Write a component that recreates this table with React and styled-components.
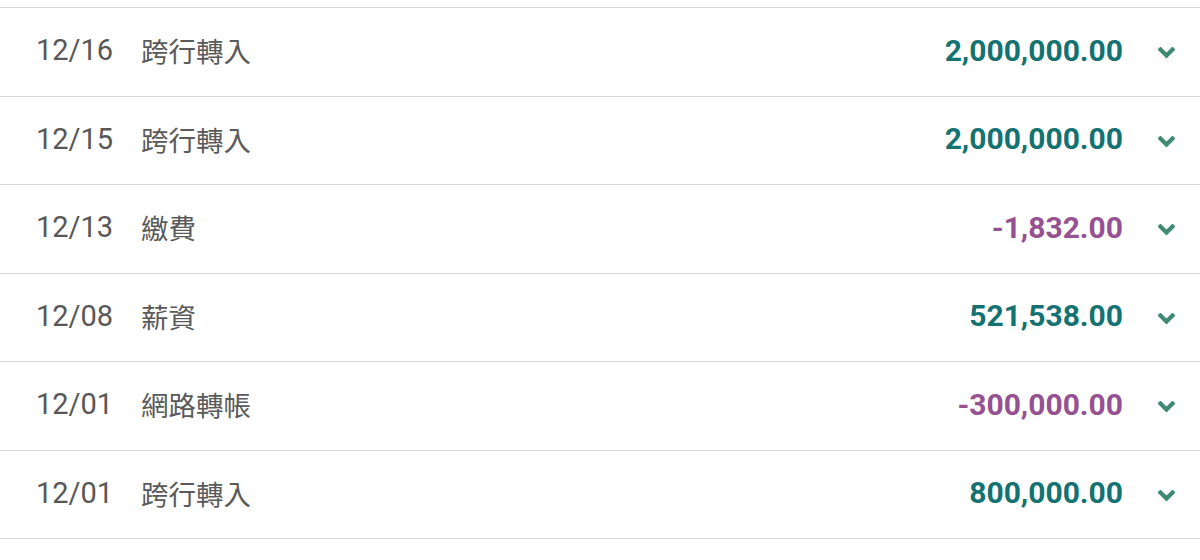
import React from "react";
import styled, { createGlobalStyle } from "styled-components";

const Global = createGlobalStyle`
  html, body { margin: 0; padding: 0; background: #fff; }
  body { font-family: Roboto, "Noto Sans CJK TC", sans-serif; }
`;

const List = styled.ul`
  list-style: none;
  margin: 0;
  padding: 7px 0 0;
  width: 1200px;
`;

const Row = styled.li`
  display: flex;
  align-items: center;
  box-sizing: border-box;
  height: 88.5px;
  padding: 0 24px 3px 36px;
  border-top: 1px solid #d6d6d6;
  &:last-child { border-bottom: 1px solid #d6d6d6; height: 89.5px; }
`;

const DateText = styled.span`
  font-family: Roboto, sans-serif;
  font-size: 29px;
  color: #585858;
  width: 105px;
  flex: none;
`;

const Desc = styled.span`
  font-family: "Noto Sans CJK TC", sans-serif;
  font-size: 27.5px;
  color: #5a5a5a;
  flex: 1;
`;

const Amount = styled.span`
  font-family: Roboto, sans-serif;
  font-weight: 700;
  font-size: 30px;
  color: ${p => (p.$neg ? "#955192" : "#147272")};
`;

const Toggle = styled.span`
  display: flex;
  align-items: center;
  justify-content: center;
  width: 20px;
  margin-left: 33px;
  margin-top: 6px;
  color: #3f8b71;
`;

const Chevron = () => (
  <svg width="17" height="12" viewBox="0 0 17 12">
    <path d="M2.5 2.5 L8.5 8.5 L14.5 2.5" fill="none" stroke="currentColor" strokeWidth="4.2" strokeLinecap="square" strokeLinejoin="miter" />
  </svg>
);

const data = [
  ["12/16", "跨行轉入", "2,000,000.00", false],
  ["12/15", "跨行轉入", "2,000,000.00", false],
  ["12/13", "繳費", "-1,832.00", true],
  ["12/08", "薪資", "521,538.00", false],
  ["12/01", "網路轉帳", "-300,000.00", true],
  ["12/01", "跨行轉入", "800,000.00", false],
];

export default function App() {
  return (
    <>
      <Global />
      <List>
        {data.map(([d, desc, amt, neg], i) => (
          <Row key={i}>
            <DateText>{d}</DateText>
            <Desc>{desc}</Desc>
            <Amount $neg={neg}>{amt}</Amount>
            <Toggle><Chevron /></Toggle>
          </Row>
        ))}
      </List>
    </>
  );
}
